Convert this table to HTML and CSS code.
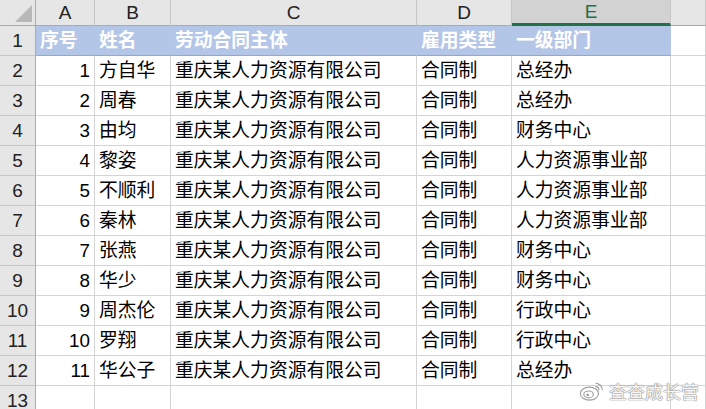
FILE: index.html
```html
<!DOCTYPE html>
<html lang="zh-CN">
<head>
  <meta charset="UTF-8" />
  <title>员工名单</title>
  <link rel="stylesheet" href="styles.css">
</head>
<body>
  <div class="sheet">
    <!-- column headers -->
    <div class="corner"><span class="corner-tri"></span></div>
    <div class="col-head">A</div>
    <div class="col-head">B</div>
    <div class="col-head">C</div>
    <div class="col-head">D</div>
    <div class="col-head active">E</div>
    <div class="col-head"></div>

    <!-- row 1: titles -->
    <div class="row-head">1</div>
    <div class="cell title">序号</div>
    <div class="cell title">姓名</div>
    <div class="cell title">劳动合同主体</div>
    <div class="cell title">雇用类型</div>
    <div class="cell title">一级部门</div>
    <div class="cell"></div>

    <div class="row-head">2</div>
    <div class="cell num">1</div><div class="cell">方自华</div><div class="cell">重庆某人力资源有限公司</div><div class="cell">合同制</div><div class="cell">总经办</div><div class="cell"></div>
    <div class="row-head">3</div>
    <div class="cell num">2</div><div class="cell">周春</div><div class="cell">重庆某人力资源有限公司</div><div class="cell">合同制</div><div class="cell">总经办</div><div class="cell"></div>
    <div class="row-head">4</div>
    <div class="cell num">3</div><div class="cell">由均</div><div class="cell">重庆某人力资源有限公司</div><div class="cell">合同制</div><div class="cell">财务中心</div><div class="cell"></div>
    <div class="row-head">5</div>
    <div class="cell num">4</div><div class="cell">黎姿</div><div class="cell">重庆某人力资源有限公司</div><div class="cell">合同制</div><div class="cell">人力资源事业部</div><div class="cell"></div>
    <div class="row-head">6</div>
    <div class="cell num">5</div><div class="cell">不顺利</div><div class="cell">重庆某人力资源有限公司</div><div class="cell">合同制</div><div class="cell">人力资源事业部</div><div class="cell"></div>
    <div class="row-head">7</div>
    <div class="cell num">6</div><div class="cell">秦林</div><div class="cell">重庆某人力资源有限公司</div><div class="cell">合同制</div><div class="cell">人力资源事业部</div><div class="cell"></div>
    <div class="row-head">8</div>
    <div class="cell num">7</div><div class="cell">张燕</div><div class="cell">重庆某人力资源有限公司</div><div class="cell">合同制</div><div class="cell">财务中心</div><div class="cell"></div>
    <div class="row-head">9</div>
    <div class="cell num">8</div><div class="cell">华少</div><div class="cell">重庆某人力资源有限公司</div><div class="cell">合同制</div><div class="cell">财务中心</div><div class="cell"></div>
    <div class="row-head">10</div>
    <div class="cell num">9</div><div class="cell">周杰伦</div><div class="cell">重庆某人力资源有限公司</div><div class="cell">合同制</div><div class="cell">行政中心</div><div class="cell"></div>
    <div class="row-head">11</div>
    <div class="cell num">10</div><div class="cell">罗翔</div><div class="cell">重庆某人力资源有限公司</div><div class="cell">合同制</div><div class="cell">行政中心</div><div class="cell"></div>
    <div class="row-head">12</div>
    <div class="cell num">11</div><div class="cell">华公子</div><div class="cell">重庆某人力资源有限公司</div><div class="cell">合同制</div><div class="cell">总经办</div><div class="cell"></div>
    <div class="row-head">13</div>
    <div class="cell"></div><div class="cell"></div><div class="cell"></div><div class="cell"></div><div class="cell"></div><div class="cell"></div>
  </div>

  <!-- watermark -->
  <div class="watermark">
    <svg width="26" height="24" viewBox="0 0 30 26">
      <ellipse cx="12" cy="16" rx="10.5" ry="7.5" fill="none" stroke="#a0a0a0" stroke-width="1.3"/>
      <ellipse cx="11" cy="17" rx="5.5" ry="4" fill="none" stroke="#a0a0a0" stroke-width="1.3"/>
      <circle cx="10" cy="17.5" r="1.6" fill="#a0a0a0"/>
      <path d="M19 4 a8 8 0 0 1 8 8" fill="none" stroke="#a0a0a0" stroke-width="1.3"/>
      <path d="M19 8 a4 4 0 0 1 4 4" fill="none" stroke="#a0a0a0" stroke-width="1.3"/>
    </svg>
    <span class="wm-text">查查成长营</span>
  </div>
</body>
</html>
```

FILE: styles.css
```css
body {
  margin: 0;
  background-color: #fff;
  font-family: "Liberation Sans", "Noto Sans CJK SC", sans-serif;
  color: #000;
  overflow: hidden;
  position: relative;
  width: 706px;
  height: 409px;
}

/* Sheet grid */
.sheet {
  display: grid;
  grid-template-columns: 36px 59px 76px 246px 95px 159px 35px;
  grid-template-rows: 26px repeat(13, 30px);
}

.sheet > div {
  box-sizing: border-box;
  border-right: 1px solid #d4d4d4;
  border-bottom: 1px solid #d4d4d4;
  white-space: nowrap;
  overflow: visible;
}

.corner {
  background-color: #e6e6e6;
  position: relative;
  border-right-color: #ababab !important;
  border-bottom-color: #ababab !important;
}

.corner-tri {
  position: absolute;
  right: 3px;
  bottom: 3px;
  width: 0;
  height: 0;
  border-left: 17px solid transparent;
  border-bottom: 17px solid #b8b8b8;
}

.col-head {
  background-color: #e6e6e6;
  font-size: 19px;
  line-height: 25px;
  text-align: center;
  color: #222;
  border-right-color: #c6c6c6 !important;
  border-bottom-color: #ababab !important;
}

.col-head.active {
  background-color: #d2d2d2;
  color: #217346;
  border-bottom: 3px solid #217346 !important;
  line-height: 23px;
}

.row-head {
  background-color: #e6e6e6;
  font-size: 19px;
  line-height: 29px;
  text-align: center;
  color: #222;
  border-right-color: #ababab !important;
  border-bottom-color: #c6c6c6 !important;
}

.cell {
  font-size: 18.8px;
  line-height: 29px;
  padding: 0 4px;
}

.cell.num {
  text-align: right;
}

.cell.title {
  background-color: #b4c6e7;
  color: #fff;
  font-weight: bold;
  border-right-color: #b4c6e7;
  border-bottom-color: #a6a6a6;
}

/* Watermark overlay */
.watermark {
  position: absolute;
  right: 7px;
  bottom: 6px;
  display: flex;
  align-items: center;
  gap: 4px;
}

.wm-text {
  font-family: "Noto Sans CJK SC", sans-serif;
  font-size: 18px;
  line-height: 22px;
  color: #f6f6f6;
  text-shadow: 0 0 1px #8a8a8a, 0 0 1px #8a8a8a, 0 0 1px #8a8a8a;
}
```
